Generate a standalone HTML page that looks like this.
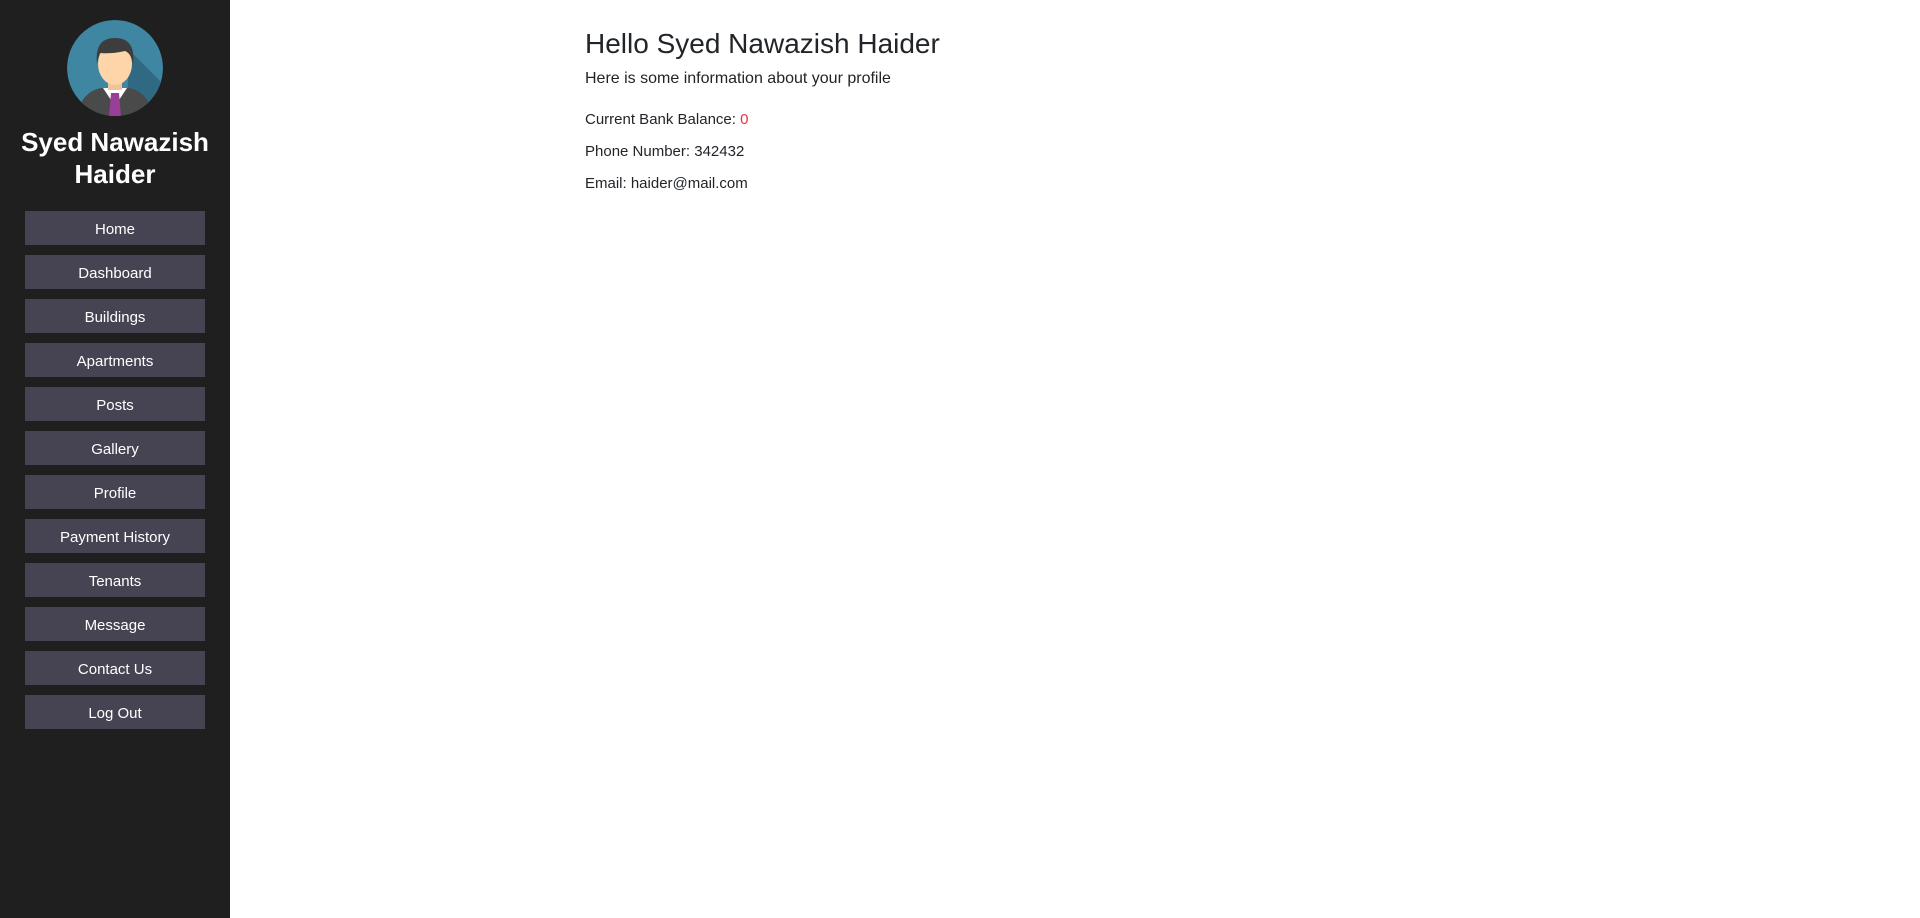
<!DOCTYPE html>
<html><head><meta charset="utf-8"><style>
body{margin:0;width:1920px;height:918px;background:#fff;font-family:"Liberation Sans",sans-serif;overflow:hidden}
.side{position:absolute;left:0;top:0;width:230px;height:918px;background:#1f1f1f}
.av{position:absolute;left:67px;top:20px}
.name{position:absolute;top:126px;left:0;width:230px;text-align:center;color:#fff;font-weight:bold;font-size:26px;line-height:32px}
.btn{position:absolute;left:25px;width:180px;height:34px;background:#464452;color:#fff;font-size:15px;line-height:34px;padding-top:2px;box-sizing:border-box;text-align:center}
.main{position:absolute;left:585px;top:0;color:#212529}
h1{position:absolute;top:26px;margin:0;font-size:28px;font-weight:normal;white-space:nowrap;line-height:36px}
p{position:absolute;margin:0;font-size:15px;white-space:nowrap;line-height:20px}
</style></head><body>
<div class="side">
<svg class="av" width="96" height="96" viewBox="0 0 96 96">
<defs><clipPath id="c"><circle cx="48" cy="48" r="48"/></clipPath></defs>
<g clip-path="url(#c)">
<circle cx="48" cy="48" r="48" fill="#3f86a3"/>
<path d="M62 30 L96 64 L96 96 L60 96 Z" fill="#2f6a82"/>
<path d="M10 96 Q14 72 34 68 L62 68 Q82 72 86 96 Z" fill="#4a4a4a"/>
<path d="M36 68 L48 86 L60 68 Z" fill="#fff"/>
<path d="M44 73 L52 73 L54 96 L42 96 Z" fill="#9a3f97"/>
<rect x="41" y="56" width="14" height="14" fill="#f0c49a"/>
<ellipse cx="48" cy="44" rx="17" ry="21" fill="#fdd5a9"/>
<path d="M30 44 Q27 18 48 18 Q69 18 66 44 Q64 33 58 31 Q45 34 33 33 Q31 38 30 44 Z" fill="#3d3d3d"/>
</g></svg>
<div class="name">Syed Nawazish<br>Haider</div>
<div class="btn" style="top:211px">Home</div>
<div class="btn" style="top:255px">Dashboard</div>
<div class="btn" style="top:299px">Buildings</div>
<div class="btn" style="top:343px">Apartments</div>
<div class="btn" style="top:387px">Posts</div>
<div class="btn" style="top:431px">Gallery</div>
<div class="btn" style="top:475px">Profile</div>
<div class="btn" style="top:519px">Payment History</div>
<div class="btn" style="top:563px">Tenants</div>
<div class="btn" style="top:607px">Message</div>
<div class="btn" style="top:651px">Contact Us</div>
<div class="btn" style="top:695px">Log Out</div>
</div>
<div class="main">
<h1>Hello Syed Nawazish Haider</h1>
<p style="top:69px;font-size:16px">Here is some information about your profile</p>
<p style="top:110px">Current Bank Balance: <span style="color:#dc3545">0</span></p>
<p style="top:142px">Phone Number: 342432</p>
<p style="top:174px">Email: haider@mail.com</p>
</div>
</body></html>
